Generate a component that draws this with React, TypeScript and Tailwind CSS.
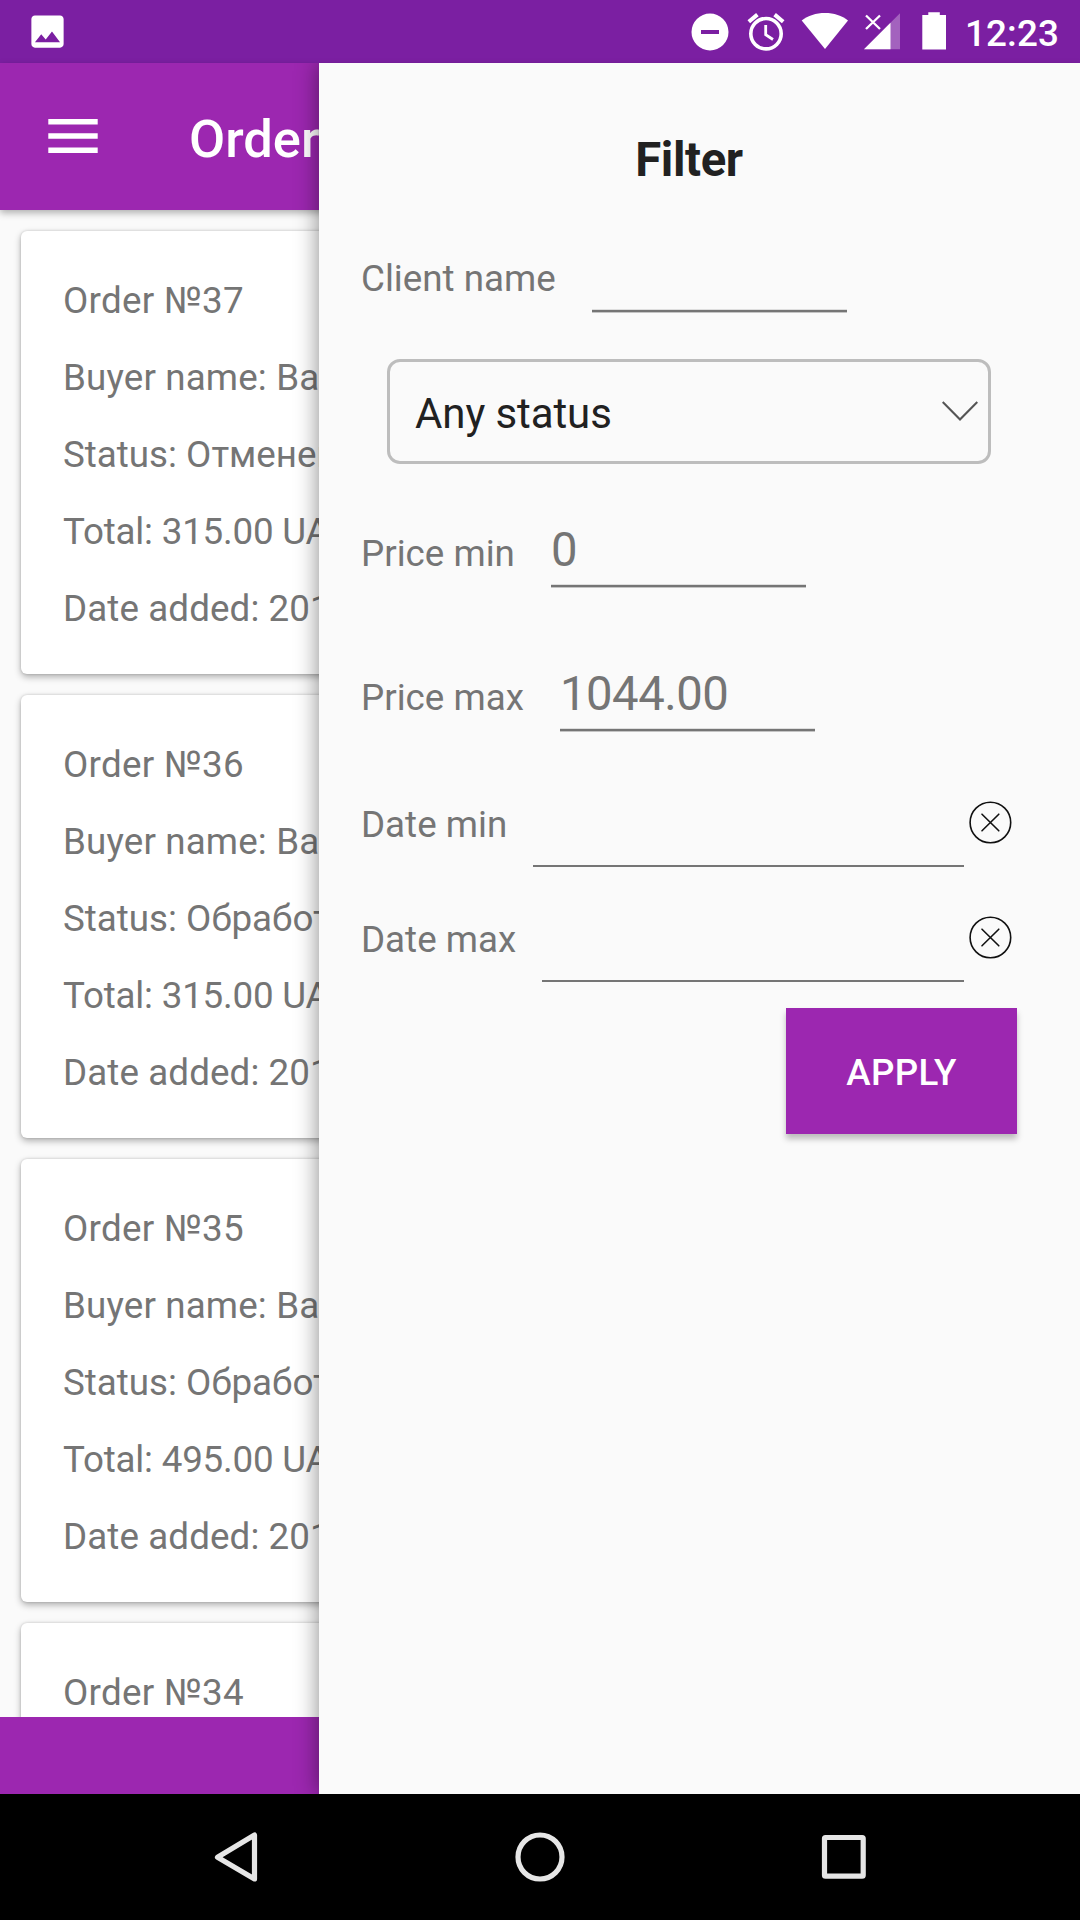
import React from "react";

type Order = { id: number; status: string; total: string };

const orders: Order[] = [
  { id: 37, status: "Отменено", total: "315.00 UAH" },
  { id: 36, status: "Обработано", total: "315.00 UAH" },
  { id: 35, status: "Обработано", total: "495.00 UAH" },
  { id: 34, status: "Обработано", total: "495.00 UAH" },
];

function OrderCard({ order }: { order: Order }) {
  return (
    <div className="h-[443px] w-[1038px] shrink-0 rounded-[6px] bg-white pt-[31px] pl-[42px] leading-[77px] shadow-[0_3px_7px_rgba(0,0,0,0.3),0_0_3px_rgba(0,0,0,0.16)]">
      <p className="tracking-[0.3px]">Order №{order.id}</p>
      <p className="tracking-[0.15px]">Buyer name: Basil</p>
      <p>Status: {order.status}</p>
      <p className="tracking-[-0.2px]">Total: {order.total}</p>
      <p className="tracking-[0.1px]">Date added: 2017-05-12</p>
    </div>
  );
}

function StatusBar() {
  return (
    <header className="flex h-[63px] shrink-0 items-start justify-between bg-[#7b1fa2]">
      <svg className="ml-[26px] mt-[10px]" width="43" height="43" viewBox="0 0 24 24" fill="#fff">
        <path d="M21 19V5c0-1.100-.9-2-2-2H5c-1.100 0-2 .9-2 2v14c0 1.100.9 2 2 2h14c1.100 0 2-.9 2-2zM8.500 13.500l2.500 3.010L14.500 12l4.500 6H5l3.500-4.500z" />
      </svg>
      <div className="flex">
        <svg width="294" height="63" viewBox="0 0 294 63" fill="#fff">
          <path fillRule="evenodd" d="M40 13.500a18.500 18.500 0 1 0 0 37a18.500 18.500 0 0 0 0-37zM31 30h18v4H31z" />
          <g fill="none" stroke="#fff">
            <circle cx="96" cy="33.700" r="15.200" strokeWidth="3.600" />
            <path d="M95.700 25v9.800l7.300 4.700" strokeWidth="2.800" />
            <path d="M78.800 21.800l8.600-7.200M113.200 21.800l-8.600-7.200" strokeWidth="4" />
          </g>
          <path d="M131.700 20.500C138 15.500 146 13 155 13s17 2.500 23 7.500L155 49z" />
          <path d="M194 49.200L230 13.200V49.200z" fillOpacity=".3" />
          <path d="M194 49.200L220.500 22.700V49.200z" />
          <path d="M196 15.500l14 13.500M210 15.500L196 29" stroke="#fff" strokeWidth="2.300" />
          <path d="M252.300 15h6v-2.800h11.500V15h6.200v34.500h-23.700z" />
        </svg>
        <span className="mr-[19px] ml-[1px] w-[96px] text-[36.750px] leading-[67px] font-medium tracking-[0.15px] text-white">12:23</span>
      </div>
    </header>
  );
}

function ClearIcon() {
  return (
    <svg className="mt-[1px] mr-[5px] ml-[5px]" width="43" height="43" viewBox="0 0 43 43" fill="none" stroke="#111" strokeWidth="1.600">
      <circle cx="21.400" cy="21.500" r="20.300" />
      <path d="M13 13.200l16.800 16.600M29.800 13.200L13 29.800" strokeLinecap="round" />
    </svg>
  );
}

function DateRow({ label, width }: { label: string; width: string }) {
  return (
    <div className="flex h-[115px] w-[656px]">
      <span className={`${width} shrink-0 leading-[50px]`}>{label}</span>
      <span className="h-[67px] flex-1 border-b-2 border-[#757575]" />
      <ClearIcon />
    </div>
  );
}

function Filter() {
  return (
    <aside className="absolute top-[63px] left-[319px] h-[1731px] w-[761px] bg-[#fafafa] pl-[42px] shadow-[0_0_22px_rgba(0,0,0,0.47)] [clip-path:inset(0_0_0_-40px)]">
      <h2 className="mt-[63px] h-[69px] w-[656px] text-center text-[47.250px] leading-[69px] font-bold tracking-[-0.35px] text-[#212121]">Filter</h2>
      <div className="mt-[44px] flex h-[120px]">
        <span className="w-[231px] pt-[10px] leading-[60px]">Client name</span>
        <span className="h-[73px] w-[255px] border-b-2 border-[#757575] shadow-[0_1px_0_#c4c4c4,inset_0_-1px_0_#dedede]" />
      </div>
      <div className="ml-[26px] flex h-[105px] w-[604px] items-center justify-between rounded-[13px] border-[3px] border-[#bdbdbd] pl-[25px] pr-[10px] text-[42px] text-[#212121]">
        <span className="pt-[4px] tracking-[-0.1px]">Any status</span>
        <svg width="36" height="22" viewBox="0 0 36 22" fill="none" stroke="#555" strokeWidth="2.200">
          <path d="M.7 1L18 18.500L35.300 1" />
        </svg>
      </div>
      <div className="mt-[46px] flex h-[144px]">
        <span className="w-[190px] pt-[14px] leading-[60px]">Price min</span>
        <span className="h-[77px] w-[255px] border-b-2 border-[#757575] text-[47.250px] leading-[81px] shadow-[0_1px_0_#c4c4c4,inset_0_-1px_0_#dedede]">0</span>
      </div>
      <div className="flex h-[126px]">
        <span className="w-[199px] pt-[14px] leading-[60px]">Price max</span>
        <span className="h-[77px] w-[255px] border-b-2 border-[#757575] text-[47.250px] leading-[81px] tracking-[-0.5px] shadow-[0_1px_0_#c4c4c4,inset_0_-1px_0_#dedede]">1044.00</span>
      </div>
      <div className="mt-[20px]">
        <DateRow label="Date min" width="w-[172px]" />
        <DateRow label="Date max" width="w-[181px]" />
      </div>
      <button className="-mt-[22px] ml-[425px] block h-[126px] w-[231px] bg-[#9c27b0] pt-[4px] font-medium tracking-[0.25px] text-white shadow-[0_5px_6px_rgba(0,0,0,0.25)]">APPLY</button>
    </aside>
  );
}

export default function App() {
  return (
    <div className="relative flex h-[1920px] w-[1080px] flex-col overflow-hidden bg-[#fafafa] font-['Roboto',sans-serif] text-[36.750px] text-[#757575]">
      <StatusBar />
      <div className="z-0 flex h-[147px] shrink-0 items-center bg-[#9c27b0] shadow-[0_3px_7px_rgba(0,0,0,0.3)]">
        <svg className="ml-[48px]" width="50" height="36" viewBox="0 0 50 36" fill="#fff">
          <path d="M.3 0h49.400v5.500H.3zM.3 14.200h49.400v5.500H.3zM.3 28.500h49.400v5.500H.3z" />
        </svg>
        <h1 className="ml-[91px] pt-[6px] text-[52.500px] font-medium text-white">Orders</h1>
      </div>
      <main className="flex h-[1507px] shrink-0 flex-col gap-[21px] overflow-hidden pt-[21px] pl-[21px]">
        {orders.map((order) => (
          <OrderCard key={order.id} order={order} />
        ))}
      </main>
      <div className="h-[77px] shrink-0 bg-[#9c27b0]" />
      <Filter />
      <nav className="z-10 flex h-[126px] shrink-0 items-center justify-center bg-black">
        <svg width="1080" height="126" viewBox="0 0 1080 126" fill="none" stroke="#e6e6e6" strokeWidth="5.200" strokeLinejoin="round">
          <path d="M254.500 41v44L217.500 63.200z" />
          <circle cx="540" cy="63" r="22" />
          <rect x="824.500" y="43.500" width="38.700" height="38.700" rx="1" />
        </svg>
      </nav>
    </div>
  );
}
